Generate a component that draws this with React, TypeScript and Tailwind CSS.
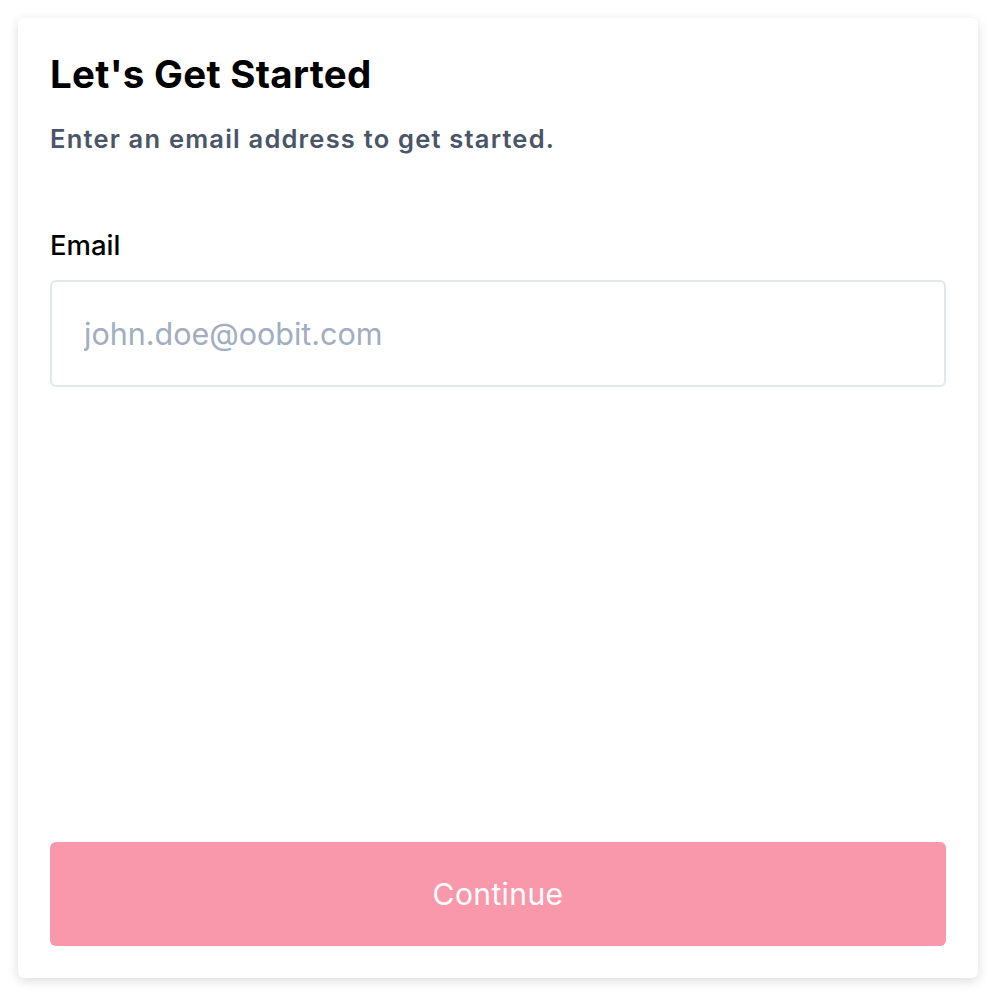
export default function App() {
  return (
    <div className="min-h-screen bg-white p-[18px] font-['Inter',sans-serif]">
      <div className="flex h-[960px] w-[960px] flex-col rounded-md bg-white p-8 shadow-[0_3px_12px_rgba(0,0,0,0.14)]">
        {/* Header */}
        <h1 className="text-[38.5px] font-bold leading-[48px] tracking-[0.3px] text-black">Let's Get Started</h1>
        <p className="mt-[25px] text-[25.5px] font-semibold leading-[32px] tracking-[1.2px] text-[#4a5568]">
          Enter an email address to get started.
        </p>

        {/* Email field */}
        <label className="mt-[72px] text-[27.5px] font-medium leading-[36px] text-black">Email</label>
        <input
          type="email"
          placeholder="john.doe@oobit.com"
          className="mt-[17px] h-[107px] w-full rounded-md border-2 border-[#e2e8f0] px-8 text-[30.5px] text-black outline-none placeholder:text-[#a0aec0]"
        />

        <div className="flex-1" />

        {/* Action */}
        <button className="h-[104px] w-full rounded-md bg-[#f997ab] text-[30px] tracking-[0.4px] text-white">
          Continue
        </button>
      </div>
    </div>
  );
}
